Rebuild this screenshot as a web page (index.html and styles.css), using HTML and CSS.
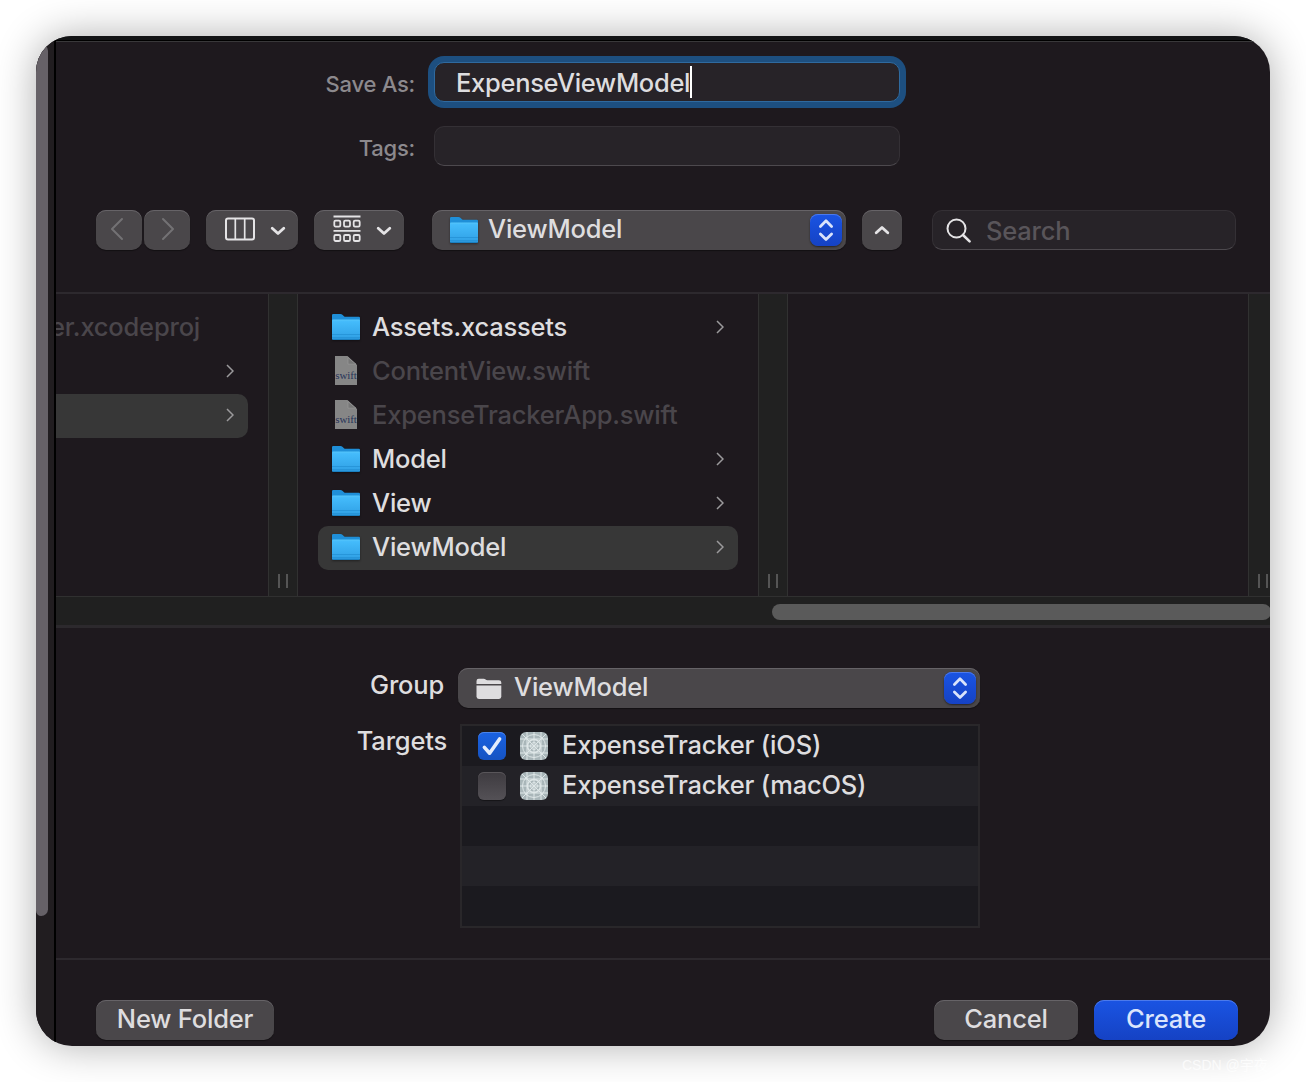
FILE: index.html
```html
<!DOCTYPE html>
<html lang="en">
<head>
    <meta charset="UTF-8">
    <meta name="viewport" content="width=device-width, initial-scale=1.0">
    <title>Save As</title>
    <link rel="stylesheet" href="styles.css">
</head>
<body>
    <svg class="defs" width="0" height="0">
        <defs>
            <linearGradient id="folderFront" x1="0" y1="0" x2="0" y2="1">
                <stop offset="0" stop-color="#56c6fb"/>
                <stop offset="0.1" stop-color="#44bbfb"/>
                <stop offset="1" stop-color="#2f9fe4"/>
            </linearGradient>
            <symbol id="folder" viewBox="0 0 28 28">
                <path d="M0 2.2Q0 1 1.2 1H8.5Q9.6 1 10.4 1.8L12 3.2Q12.6 3.7 13.6 3.7H26.8Q28 3.7 28 4.9V12H0Z" fill="#1f8fd8"/>
                <path d="M0 7.6Q0 6.6 1 6.6H27Q28 6.6 28 7.6V25.6Q28 27 26.6 27H1.4Q0 27 0 25.6Z" fill="url(#folderFront)"/>
                <path d="M0 21.5H28M0 24.5H28" stroke="#2492d6" stroke-width="0.8"/>
                <path d="M0.3 26.3H27.7" stroke="#1779b8" stroke-width="1"/>
            </symbol>
            <symbol id="swift" viewBox="0 0 22 29">
                <path d="M0 0H12.5L22 9V29H0Z" fill="#868686"/>
                <path d="M13 1.5V8.2H21Z" fill="#777" stroke="#999" stroke-width="0.7"/>
            </symbol>
            <symbol id="next" viewBox="0 0 8 14">
                <path d="M1 1L7 7L1 13" fill="none" stroke="#9b9a9c" stroke-width="1.5"/>
            </symbol>
            <symbol id="down" viewBox="0 0 16 10">
                <path d="M2.2 2.2L8 7.6L13.8 2.2" fill="none" stroke="#e4e3e5" stroke-width="2.8" stroke-linecap="round" stroke-linejoin="round"/>
            </symbol>
            <symbol id="updown" viewBox="0 0 32 32">
                <path d="M10.4 12.4L16 6.8L21.6 12.4M10.4 20L16 25.4L21.6 20" fill="none" stroke="#d9e3fb" stroke-width="2.8" stroke-linecap="round" stroke-linejoin="round"/>
            </symbol>
            <symbol id="app" viewBox="0 0 28 28">
                <rect width="28" height="28" rx="6" fill="#a9b6b9"/>
                <g fill="none" stroke="#dfe7e8" stroke-width="1">
                    <path d="M2 2L26 26M26 2L2 26M14 0V28M0 14H28M7 0V28M21 0V28M0 7H28M0 21H28"/>
                    <circle cx="14" cy="14" r="11.5"/>
                    <circle cx="14" cy="14" r="6.5" stroke-width="1.5"/>
                    <circle cx="14" cy="14" r="3.5"/>
                </g>
            </symbol>
        </defs>
    </svg>

    <div class="window">
        <div class="editor-edge">
            <div class="editor-scroll"></div>
        </div>
        <div class="sheet">
            <div class="top-edge"></div>

            <div class="fields">
                <div class="field-row">
                    <label class="field-label">Save As:</label>
                    <div class="field focused"><span>ExpenseViewModel</span><span class="caret"></span></div>
                </div>
                <div class="field-row">
                    <label class="field-label">Tags:</label>
                    <div class="field"></div>
                </div>
            </div>

            <div class="toolbar">
                <div class="nav">
                    <div class="button nav-button"><svg width="14" height="24" viewBox="0 0 14 24"><path d="M12 2L2 12L12 22" fill="none" stroke="#737274" stroke-width="2" stroke-linecap="round" stroke-linejoin="round"/></svg></div>
                    <div class="button nav-button forward"><svg width="14" height="24" viewBox="0 0 14 24"><path d="M2 2L12 12L2 22" fill="none" stroke="#737274" stroke-width="2" stroke-linecap="round" stroke-linejoin="round"/></svg></div>
                </div>
                <div class="button view-button">
                    <svg width="30" height="24" viewBox="0 0 30 24"><g fill="none" stroke="#e4e3e5"><rect x="1" y="1.4" width="28" height="21.2" rx="2" stroke-width="2"/><path d="M10.3 1V23M19.7 1V23" stroke-width="1.7"/></g></svg>
                    <svg width="16" height="10"><use href="#down"/></svg>
                </div>
                <div class="button group-button">
                    <svg width="28" height="28" viewBox="0 0 28 28"><g fill="none" stroke="#e4e3e5" stroke-width="1.8"><path d="M0.5 1.5H27.5M0.5 15.8H27.5"/><rect x="1.3" y="5.6" width="6" height="6" rx="1.3"/><rect x="11" y="5.6" width="6" height="6" rx="1.3"/><rect x="20.7" y="5.6" width="6" height="6" rx="1.3"/><rect x="1.3" y="20" width="6" height="6" rx="1.3"/><rect x="11" y="20" width="6" height="6" rx="1.3"/><rect x="20.7" y="20" width="6" height="6" rx="1.3"/></g></svg>
                    <svg width="16" height="10"><use href="#down"/></svg>
                </div>
                <div class="button popup path-popup">
                    <svg class="folder" width="28" height="28"><use href="#folder"/></svg>
                    <span>ViewModel</span>
                    <svg class="stepper" width="32" height="32"><use href="#updown"/></svg>
                </div>
                <div class="button collapse"><svg class="flip" width="16" height="10"><use href="#down"/></svg></div>
                <div class="field search">
                    <svg width="26" height="26" viewBox="0 0 26 26"><g fill="none" stroke="#e4e3e5"><circle cx="10.5" cy="10.5" r="9" stroke-width="2"/><path d="M17 17L23.6 23.4" stroke-width="2.6" stroke-linecap="round"/></g></svg>
                    <span>Search</span>
                </div>
            </div>

            <div class="browser">
                <div class="column column-parent">
                    <div class="item dim"><span>er.xcodeproj</span></div>
                    <div class="item"><svg class="next" width="8" height="14"><use href="#next"/></svg></div>
                    <div class="item selected"><svg class="next" width="8" height="14"><use href="#next"/></svg></div>
                </div>
                <div class="divider"><span class="grip"></span></div>
                <div class="column">
                    <div class="item">
                        <svg class="folder" width="28" height="28"><use href="#folder"/></svg>
                        <span>Assets.xcassets</span>
                        <svg class="next" width="8" height="14"><use href="#next"/></svg>
                    </div>
                    <div class="item dim">
                        <span class="file"><svg width="22" height="29"><use href="#swift"/></svg><span class="file-type">swift</span></span>
                        <span>ContentView.swift</span>
                    </div>
                    <div class="item dim">
                        <span class="file"><svg width="22" height="29"><use href="#swift"/></svg><span class="file-type">swift</span></span>
                        <span>ExpenseTrackerApp.swift</span>
                    </div>
                    <div class="item">
                        <svg class="folder" width="28" height="28"><use href="#folder"/></svg>
                        <span>Model</span>
                        <svg class="next" width="8" height="14"><use href="#next"/></svg>
                    </div>
                    <div class="item">
                        <svg class="folder" width="28" height="28"><use href="#folder"/></svg>
                        <span>View</span>
                        <svg class="next" width="8" height="14"><use href="#next"/></svg>
                    </div>
                    <div class="item selected">
                        <svg class="folder" width="28" height="28"><use href="#folder"/></svg>
                        <span>ViewModel</span>
                        <svg class="next" width="8" height="14"><use href="#next"/></svg>
                    </div>
                </div>
                <div class="divider"><span class="grip"></span></div>
                <div class="column"></div>
                <div class="divider"><span class="grip"></span></div>
            </div>
            <div class="scrollbar">
                <div class="thumb"></div>
            </div>

            <div class="options">
                <div class="option-row">
                    <label class="option-label group-label">Group</label>
                    <div class="button popup group-popup">
                        <svg width="26" height="22" viewBox="0 0 26 22"><path d="M0.5 6V3Q0.5 0.8 2.7 0.8H7.6Q8.8 0.8 9.6 1.6Q10.3 2.3 11.4 2.3H22.8Q25.3 2.3 25.3 4.6V6Z" fill="#dedddf"/><path d="M0.5 7.6H25.3V18.6Q25.3 21 23 21H2.8Q0.5 21 0.5 18.6Z" fill="#dedddf"/></svg>
                        <span>ViewModel</span>
                        <svg class="stepper" width="32" height="32"><use href="#updown"/></svg>
                    </div>
                </div>
                <div class="option-row targets-row">
                    <label class="option-label targets-label">Targets</label>
                    <div class="targets">
                        <div class="target">
                            <span class="checkbox checked"><svg width="28" height="28" viewBox="0 0 28 28"><path d="M6.4 15.4L11.6 21.2L21.6 7" fill="none" stroke="#e4edfc" stroke-width="3.6" stroke-linecap="round" stroke-linejoin="round"/></svg></span>
                            <svg width="28" height="28"><use href="#app"/></svg>
                            <span class="target-name">ExpenseTracker (iOS)</span>
                        </div>
                        <div class="target">
                            <span class="checkbox"></span>
                            <svg width="28" height="28"><use href="#app"/></svg>
                            <span class="target-name">ExpenseTracker (macOS)</span>
                        </div>
                        <div class="target"></div>
                        <div class="target"></div>
                        <div class="target"></div>
                    </div>
                </div>
            </div>

            <div class="footer">
                <div class="button new-folder">New Folder</div>
                <div class="button cancel">Cancel</div>
                <div class="button create">Create</div>
            </div>
        </div>
    </div>
    <div class="watermark">CSDN @宇夜</div>
</body>
</html>
```
FILE: styles.css
```css
* {
    box-sizing: border-box;
}
body {
    margin: 0;
    padding: 36px;
    height: 1082px;
    overflow: hidden;
    background-color: #fff;
    color: #dedddf;
    font-family: Inter, "Liberation Sans", sans-serif;
    font-size: 25.5px;
    font-weight: 450;
    letter-spacing: -0.2px;
    line-height: 32px;
    white-space: nowrap;
}
svg {
    display: block;
    flex: none;
}
.defs {
    position: absolute;
}
.window {
    display: flex;
    width: 1234px;
    height: 1010px;
    border-radius: 36px;
    overflow: hidden;
    background-color: #1e191e;
    box-shadow: 0 0 40px rgba(0, 0, 0, 0.32);
}

/* edge of the editor behind the sheet */
.editor-edge {
    flex: none;
    width: 20px;
    padding-top: 8px;
    background-color: #211d20;
    border-right: 2px solid #000;
}
.editor-scroll {
    width: 12px;
    height: 872px;
    background-color: #666167;
    border-radius: 0 8px 8px 6px;
}
.sheet {
    flex: none;
    width: 1214px;
    overflow: hidden;
}
.top-edge {
    height: 6px;
    background-color: #131416;
    border-bottom: 1px solid #39383a;
    box-shadow: inset 0 -1px #000;
}

/* name and tags */
.fields {
    display: flex;
    flex-direction: column;
    gap: 24px;
    padding-top: 20px;
}
.field-row {
    display: flex;
    align-items: center;
}
.field-label {
    width: 359px;
    margin-right: 19px;
    padding-top: 4px;
    text-align: right;
    font-size: 22px;
    font-weight: 500;
    letter-spacing: -0.25px;
    color: #8c898d;
}
.field {
    display: flex;
    align-items: center;
    width: 466px;
    height: 40px;
    background-color: #272328;
    border: 1px solid #343035;
    border-bottom-color: #4d494e;
    border-radius: 10px;
}
.focused {
    padding-left: 21px;
    letter-spacing: -0.3px;
    border-color: #2f6a9f;
    box-shadow: 0 0 0 6px #1d4f80;
}
.focused span:first-child {
    padding-top: 2px;
}
.caret {
    width: 2px;
    height: 32px;
    background-color: #fff;
}

/* toolbar */
.toolbar {
    display: flex;
    padding: 44px 0 42px 40px;
}
.button {
    display: flex;
    align-items: center;
    height: 40px;
    background-color: #4a474a;
    border-radius: 10px;
    box-shadow: inset 0 1px #666367, 0 1px 1px rgba(0, 0, 0, 0.4);
}
.nav {
    display: flex;
    gap: 2px;
    margin-right: 16px;
}
.nav-button {
    width: 46px;
    padding: 0 0 2px 14px;
}
.forward {
    padding-left: 17px;
}
.view-button {
    width: 92px;
    margin-right: 16px;
    padding: 0 0 2px 19px;
    gap: 15px;
}
.group-button {
    width: 90px;
    margin-right: 28px;
    padding: 0 0 2px 19px;
    gap: 15px;
}
.view-button svg + svg,
.group-button svg + svg {
    margin-top: 3px;
}
.popup span {
    margin-top: -2px;
}
.path-popup {
    width: 414px;
    margin-right: 16px;
    padding-left: 18px;
}
.path-popup span {
    margin-left: 10px;
}
.stepper {
    margin-left: auto;
    margin-right: 4px;
    background: linear-gradient(#1a54e3, #1542c4);
    border-radius: 8px;
    box-shadow: inset 0 1px #4c7aec, 0 1px 2px rgba(0, 0, 0, 0.5);
}
.collapse {
    width: 40px;
    justify-content: center;
    margin-right: 30px;
}
.flip {
    transform: rotate(180deg);
}
.search {
    width: 304px;
    padding: 2px 0 0 13px;
    gap: 14px;
    color: #59555a;
}

/* column browser */
.browser {
    display: flex;
    height: 304px;
    border-top: 2px solid #2d292e;
}
.column {
    flex: none;
    width: 460px;
    padding: 12px 20px 0;
}
.column-parent {
    width: 212px;
    padding-left: 0;
}
.item {
    display: flex;
    align-items: center;
    height: 44px;
    padding: 0 14px;
    border-radius: 10px;
}
.item > span:not(.file) {
    margin: -2px 0 0 12px;
}
.column-parent .item {
    padding-left: 0;
    border-radius: 0 10px 10px 0;
}
/* scrolled sideways, the start of the name runs out of view */
.column-parent .item > span:not(.file) {
    margin-left: -6px;
}
.dim {
    color: #4a464b;
}
.selected {
    background-color: #373737;
}
.next {
    margin-left: auto;
    margin-top: -2px;
}
.folder {
    filter: drop-shadow(0 1px 1px rgba(0, 0, 0, 0.4));
}
.item .folder {
    margin-top: -2px;
}
.file {
    position: relative;
    width: 28px;
    padding-left: 3px;
    margin-top: -3px;
}
.file-type {
    position: absolute;
    left: 3px;
    top: 12px;
    width: 22px;
    font-family: "Liberation Serif", serif;
    font-size: 11px;
    letter-spacing: -0.1px;
    line-height: 14px;
    text-align: center;
    color: #263459;
}
.divider {
    flex: none;
    display: flex;
    align-items: flex-end;
    justify-content: center;
    width: 30px;
    padding-bottom: 8px;
    background-color: #212121;
    border: 1px solid #313131;
    border-width: 0 1px;
}
.grip {
    width: 10px;
    height: 14px;
    border: 2px solid #555;
    border-width: 0 2px;
}
.scrollbar {
    height: 32px;
    padding-top: 7px;
    background-color: #202020;
    border-top: 1px solid #303030;
    border-bottom: 3px solid #2c292d;
}
.thumb {
    width: 499px;
    height: 16px;
    margin-left: 716px;
    background-color: #5a5a5a;
    border-radius: 8px;
}

/* group and targets */
.options {
    height: 332px;
    padding-top: 40px;
    border-bottom: 2px solid #2d292e;
}
.option-row {
    display: flex;
}
.option-label {
    padding-top: 1px;
    text-align: right;
}
.group-label {
    width: 388px;
    margin-right: 14px;
}
.group-popup {
    width: 522px;
    padding-left: 18px;
}
.group-popup svg:first-child {
    margin-top: 1px;
}
.group-popup span {
    margin-left: 12px;
}
.targets-row {
    padding-top: 16px;
}
.targets-label {
    width: 391px;
    margin-right: 13px;
}
.targets {
    width: 520px;
    border: 2px solid #29272a;
}
.target {
    display: flex;
    align-items: center;
    height: 40px;
    padding-left: 16px;
    gap: 14px;
    background-color: #1b1a1f;
}
.target:nth-child(even) {
    background-color: #232227;
}
.target-name {
    margin-top: -2px;
}
.checkbox {
    width: 28px;
    height: 28px;
    border-radius: 6px;
    background: linear-gradient(#3e3b40, #545156);
    box-shadow: inset 0 1px #59565a, 0 1px 1px rgba(0, 0, 0, 0.4);
}
.checked {
    background: linear-gradient(#1a62e2, #1553c2);
    box-shadow: inset 0 1px #4a84ea;
}

/* footer */
.footer {
    display: flex;
    padding: 40px 32px 0 40px;
}
.footer .button {
    justify-content: center;
    padding-bottom: 2px;
}
.new-folder {
    width: 178px;
    margin-right: auto;
}
.cancel {
    width: 144px;
    margin-right: 16px;
}
.footer .create {
    width: 144px;
    color: #dbe5fc;
    background: linear-gradient(#1a54e3, #1542c4);
    box-shadow: inset 0 1px #4c7aec, 0 1px 1px rgba(0, 0, 0, 0.4);
}
.watermark {
    position: absolute;
    left: 1182px;
    top: 1055px;
    font-family: "Liberation Sans", "Noto Sans CJK SC", sans-serif;
    font-size: 14px;
    font-weight: 400;
    letter-spacing: 0;
    line-height: 20px;
    color: rgba(255, 255, 255, 0.75);
}
```
